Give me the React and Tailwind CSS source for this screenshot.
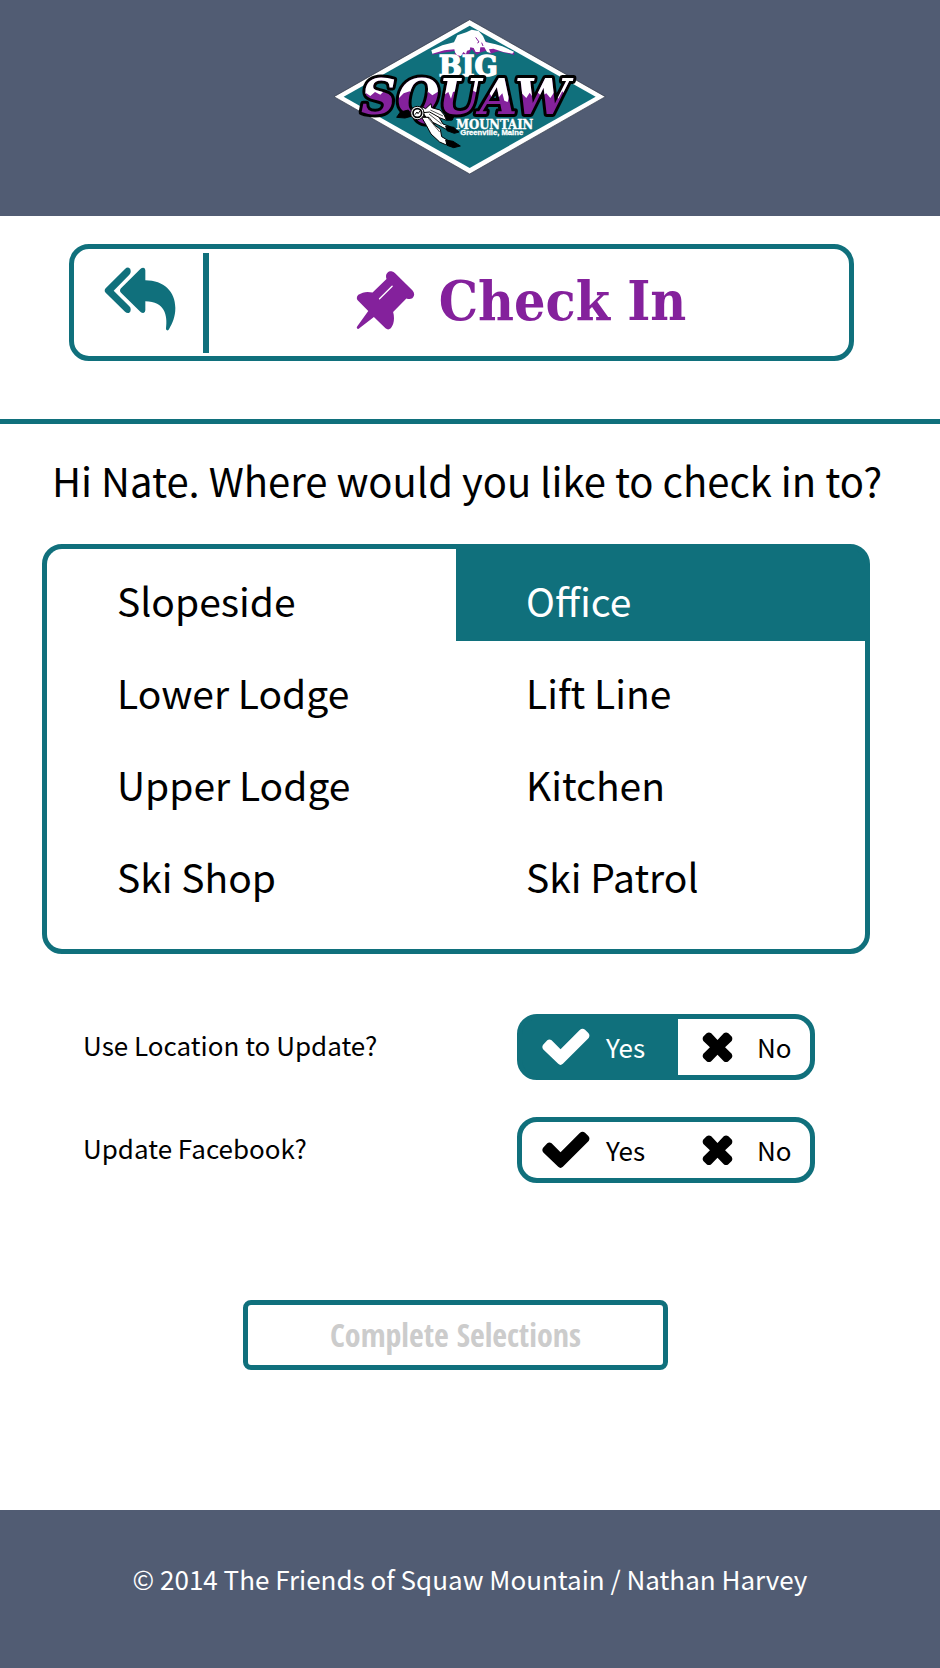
import { useState } from "react";

const LOCATIONS = [
  "Slopeside",
  "Office",
  "Lower Lodge",
  "Lift Line",
  "Upper Lodge",
  "Kitchen",
  "Ski Shop",
  "Ski Patrol",
];

function Logo() {
  return (
    <svg
      viewBox="0 0 870 510"
      className="w-[290px]"
      role="img"
      aria-label="Big Squaw Mountain, Greenville, Maine"
    >
      <defs>
        <clipPath id="squaw-clip">
          <text
            x="108"
            y="312"
            fontSize="146"
            fontWeight="700"
            fontStyle="italic"
            fontFamily='"DejaVu Serif", serif'
          >
            SQUAW
          </text>
        </clipPath>
      </defs>
      <path d="M434 29L841 260L434 492L27 260Z" fill="#fff" stroke="#2c3442" strokeWidth="2" />
      <path d="M434 47L812 260L434 474L56 260Z" fill="#10707c" />
      {/* Peak: purple shade below the snow cap */}
      <path
        d="M319 134L340 119L385 112L440 70L500 104L567 126L568 135L520 124L496 131L484 122L470 126L455 134L440 118L428 138L410 134L400 144L388 132L392 122Z"
        fill="#84219c"
      />
      <path
        d="M319 121L352 106L387 97L397 76L424 67L440 59L461 63L474 78L482 96L512 103L532 109L567 125L562 131L535 126L505 116L492 118L497 129L486 126L478 112L466 112L464 126L452 126L446 114L436 112L434 120L426 122L423 132L415 126L408 138L396 136L390 127L388 118L358 121L322 131Z"
        fill="#fff"
      />
      <path d="M452 82L462 96L457 99M470 98L474 108" fill="none" stroke="#84219c" strokeWidth="3" />
      <text
        x="430"
        y="197"
        textAnchor="middle"
        fontSize="82"
        fontWeight="700"
        fill="#fff"
        stroke="#fff"
        strokeWidth="4"
        fontFamily='"DejaVu Serif", serif'
      >
        BIG
      </text>
      <text
        x="108"
        y="312"
        fontSize="146"
        fontWeight="700"
        fontStyle="italic"
        fill="#84219c"
        stroke="#000"
        strokeWidth="18"
        strokeLinejoin="round"
        paintOrder="stroke"
        fontFamily='"DejaVu Serif", serif'
      >
        SQUAW
      </text>
      <g clipPath="url(#squaw-clip)">
        <path
          d="M90 190H770V240L730 240L722 256L712 244L700 266L688 246L676 264L664 250L650 258L636 246L628 268L614 248L604 264L590 250L570 264L556 244L548 276L538 272L532 250L516 268L500 262L492 246L470 242L456 248L440 240L424 246L400 242L384 246L378 266L370 246L356 256L344 242L322 256L310 246L296 264L284 246L268 256L254 244L236 250L222 264L210 244L196 248L180 240L166 254L150 246L136 258L124 250L112 264L90 246Z"
          fill="#fff"
        />
      </g>
      {/* Medallion and feathers */}
      <g stroke="#000" strokeWidth="3" strokeLinejoin="round">
        <path d="M215 322L226 306L250 300L262 318L240 324Z" fill="#000" />
        <path d="M290 290L302 296L318 281L320 293L345 300L362 320L386 318L382 330L362 330L330 318L298 312Z" fill="#fff" />
        <path d="M294 308L314 306L342 322L354 342L376 350L364 358L338 344L308 330Z" fill="#fff" />
        <path d="M290 322L312 322L330 346L346 358L350 380L370 392L362 404L344 396L318 372L304 346Z" fill="#fff" />
        <path d="M358 316L388 318L380 330L364 330Z" fill="#000" />
        <path d="M362 348L386 352L402 366L388 370L366 362Z" fill="#000" />
        <path d="M362 390L384 394L406 408L386 413L366 406Z" fill="#000" />
        <path d="M306 320L344 366M312 312L350 342M316 300L354 318" fill="none" strokeWidth="2" />
        <circle cx="277" cy="309" r="20" fill="#fff" />
        <circle cx="277" cy="309" r="13" fill="#fff" strokeWidth="5" />
        <path d="M270 314L276 306L279 311L285 303" fill="none" />
      </g>
      <text
        x="509"
        y="356"
        textAnchor="middle"
        fontSize="39"
        fontWeight="700"
        fill="#fff"
        stroke="#fff"
        fontFamily='"DejaVu Serif Condensed", "DejaVu Serif", serif'
      >
        MOUNTAIN
      </text>
      <text
        x="500"
        y="376"
        textAnchor="middle"
        fontSize="23"
        fontWeight="700"
        fill="#fff"
        stroke="#fff"
        fontFamily='"Liberation Sans", sans-serif'
      >
        Greenville, Maine
      </text>
    </svg>
  );
}

function ReplyAllIcon() {
  return (
    <svg viewBox="130 109 216 192" className="w-[72px]" fill="#10707c" aria-hidden="true">
      <path d="M132 180Q132 176 135 173L193 115Q198 110 204 111Q210 113 210 120V124Q210 128 206 132L159 180L206 227Q210 231 210 235V238Q210 245 204 247Q198 248 193 243L135 186Q132 183 132 180Z" />
      <path d="M178 180Q178 176 181 173L239 115Q243 111 248 111Q254 112 254 119V149C310 149 344 183 344 232C344 258 336 276 325 296Q323 300 319 299Q315 298 316 293C321 255 313 213 254 212V239Q254 246 248 247Q243 247 239 243L181 186Q178 183 178 180Z" />
    </svg>
  );
}

function PinIcon() {
  return (
    <svg viewBox="886 120 178 177" className="w-[59px]" aria-hidden="true">
      <path
        fill="#84219c"
        d="M978 144C973 130 982 120 993 121Q1000 122 1004 127L1056 178Q1063 185 1061 194C1058 204 1050 207 1038 203L998 244C1003 262 1001 280 991 293Q983 300 975 293L940 259L897 292Q892 297 889 293Q887 290 891 285L923 241L891 208Q885 200 893 192C906 183 920 181 936 185Z"
      />
      <path d="M957 204L995 166" stroke="#fff" strokeWidth="4" strokeLinecap="round" />
    </svg>
  );
}

function CheckIcon() {
  return (
    <svg viewBox="127 80 145 114" className="w-[48px]" fill="currentColor" aria-hidden="true">
      <path d="M131 130L143 117Q149 112 156 117L183 144L241 86Q249 79 257 85L267 95Q273 102 268 110L190 188Q183 195 176 188L131 145Q125 137 131 130Z" />
    </svg>
  );
}

function CrossIcon() {
  return (
    <svg viewBox="608 91 94 93" className="w-[31px]" fill="currentColor" aria-hidden="true">
      <path d="M612 105L622 95Q629 90 636 95L655 115L674 95Q681 90 688 95L698 105Q702 111 698 118L678 137L698 157Q702 164 698 170L688 180Q681 185 674 180L655 160L636 180Q629 185 622 180L612 170Q608 164 612 157L632 137L612 118Q608 111 612 105Z" />
    </svg>
  );
}

function YesNo({ name, label, initial }) {
  const [value, setValue] = useState(initial);
  return (
    <fieldset className="flex items-center justify-between">
      <legend className="float-left pb-1 text-[26px] leading-[40px]">{label}</legend>
      <div className="ml-auto grid h-[66px] w-[298px] grid-cols-[156px_1fr] overflow-hidden rounded-[20px] border-5 border-[#10707c] bg-[#10707c] text-[26px] leading-[40px]">
        <label
          className={
            "relative flex cursor-pointer items-center gap-4 pl-5 " +
            (value === "yes" ? "text-white" : "bg-white text-black")
          }
        >
          <input
            type="radio"
            name={name}
            className="sr-only"
            checked={value === "yes"}
            onChange={() => setValue("yes")}
          />
          <CheckIcon />
          Yes
        </label>
        <label
          className={
            "relative flex cursor-pointer items-center gap-6 pl-6 " +
            (value === "no" ? "text-white" : "bg-white text-black")
          }
        >
          <input
            type="radio"
            name={name}
            className="sr-only"
            checked={value === "no"}
            onChange={() => setValue("no")}
          />
          <CrossIcon />
          No
        </label>
      </div>
    </fieldset>
  );
}

export default function App() {
  const [place, setPlace] = useState("Office");
  return (
    <div className="flex min-h-screen flex-col bg-white font-['Noto_Sans_CJK_SC',sans-serif] text-black">
      <header className="flex h-[216px] justify-center bg-[#515c73] pt-[10px]">
        <div>
          <Logo />
        </div>
      </header>

      <div className="border-b-5 border-[#10707c] pt-7 pr-[86px] pb-[58px] pl-[69px]">
        <div className="flex h-[117px] items-center rounded-[20px] border-5 border-[#10707c]">
          <button
            type="button"
            aria-label="Back"
            className="flex h-[100px] w-[135px] cursor-pointer items-center border-r-6 border-[#10707c] pb-2 pl-[30px]"
          >
            <ReplyAllIcon />
          </button>
          <h1 className="flex flex-1 items-center justify-center gap-6 pr-4 pb-1 font-['DejaVu_Serif_Condensed','DejaVu_Serif',serif] text-[55px] leading-[72px] font-bold text-[#84219c]">
            <PinIcon />
            Check In
          </h1>
        </div>
      </div>

      <main className="flex-1">
        <h2 id="prompt" className="pt-6 pr-6 pl-[52px] text-[40px] leading-[64px]">
          Hi Nate. Where would you like to check in to?
        </h2>

        <div
          role="radiogroup"
          aria-labelledby="prompt"
          className="mt-8 mr-[70px] ml-[42px] grid grid-cols-2 overflow-hidden rounded-[20px] border-5 border-[#10707c] bg-[#10707c] text-[39px] leading-[60px]"
        >
          {LOCATIONS.map((name) => (
            <label
              key={name}
              className={
                "relative flex h-[92px] cursor-pointer items-center pt-[10px] pl-[70px] " +
                (place === name ? "text-white" : "bg-white text-black")
              }
            >
              <input
                type="radio"
                name="place"
                className="sr-only"
                checked={place === name}
                onChange={() => setPlace(name)}
              />
              {name}
            </label>
          ))}
          <div className="col-span-2 h-8 bg-white" />
        </div>

        <div className="mt-[60px] mr-[125px] ml-[83px] flex flex-col gap-[37px]">
          <YesNo name="location" label="Use Location to Update?" initial="yes" />
          <YesNo name="facebook" label="Update Facebook?" initial="" />
        </div>

        <div className="flex justify-center pt-[117px] pr-[29px] pb-10">
          <button
            type="button"
            disabled
            className="h-[70px] w-[425px] rounded-lg border-5 border-[#10707c] font-['Liberation_Sans_Narrow','Open_Sans_Condensed',sans-serif] text-[32px] leading-[40px] font-bold text-[#cccccc]"
          >
            Complete Selections
          </button>
        </div>
      </main>

      <footer className="flex h-[158px] items-center justify-center bg-[#515c73] pb-5 text-[26px] leading-[40px] text-white">
        © 2014 The Friends of Squaw Mountain / Nathan Harvey
      </footer>
    </div>
  );
}
